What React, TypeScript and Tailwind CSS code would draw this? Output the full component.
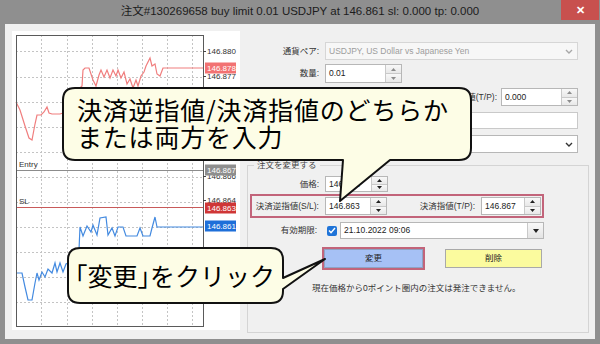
import React from 'react';

const ui = "font-['Liberation_Sans','Noto_Sans_CJK_JP',sans-serif]";

const redLine = [
  [16, 102], [20, 110], [25, 126], [29, 138], [32, 140], [35, 124], [37, 115], [41, 115], [44, 112], [47, 107],
  [49, 113], [52, 114], [60, 114], [66, 112], [70, 105], [74, 96], [78, 90], [82, 86], [83, 70], [85, 68],
  [89, 68], [93, 80], [96, 86], [99, 75], [101, 70], [104, 77], [107, 70], [110, 78], [113, 70], [116, 76],
  [118, 70], [121, 78], [124, 72], [127, 84], [130, 79], [133, 88], [136, 80], [138, 86], [141, 76], [144, 72],
  [146, 66], [150, 58], [152, 66], [155, 64], [157, 74], [160, 76], [163, 68], [203, 68],
];

const blueLeft = [
  [16, 273], [22, 273], [25, 287], [28, 300], [32, 300], [35, 283], [37, 273], [39, 280], [42, 272], [45, 277],
  [48, 269], [52, 273], [55, 263], [57, 272], [60, 263], [63, 272], [66, 264], [70, 262],
];

const blueRight = [
  [76, 258], [79, 250], [80, 227], [83, 236], [87, 226], [91, 232], [93, 225], [97, 235], [100, 218], [106, 217],
  [108, 235], [112, 228], [115, 236], [118, 227], [123, 227], [126, 236], [137, 236], [140, 228], [143, 236],
  [150, 236], [152, 228], [155, 217], [157, 227], [203, 227],
];

const pts = (a: number[][]) => a.map((p) => p.join(',')).join(' ');

function Tag({ y, bg, text }: { y: number; bg: string; text: string }) {
  return (
    <g>
      <rect x={205} y={y - 5.5} width={31} height={11} fill={bg} />
      <text x={207} y={y + 3} fontSize={8} fill="#fff">{text}</text>
    </g>
  );
}

function Axis({ y, text }: { y: number; text: string }) {
  return (
    <g>
      <line x1={203} y1={y + 0.5} x2={206} y2={y + 0.5} stroke="#444" />
      <text x={207} y={y + 3} fontSize={8} fill="#333">{text}</text>
    </g>
  );
}

function Chart() {
  const vx = [41, 67, 92, 117, 142, 167, 192];
  const hy = [51, 77, 102, 127, 152, 177, 202, 227, 252, 277, 302];
  return (
    <svg width="228" height="299" viewBox="12 31 228 299" className="block" fontFamily="Liberation Sans, sans-serif">
      {vx.map((x) => (
        <line key={x} x1={x + 0.5} y1={35} x2={x + 0.5} y2={327} stroke="#c4c4c4" strokeDasharray="2 2" />
      ))}
      {hy.map((y) => (
        <line key={y} x1={16} y1={y + 0.5} x2={203} y2={y + 0.5} stroke="#c4c4c4" strokeDasharray="2 2" />
      ))}
      <polyline points={pts(redLine)} fill="none" stroke="#f07e7e" strokeWidth={1.2} />
      <polyline points={pts(blueLeft)} fill="none" stroke="#438ae0" strokeWidth={1.2} />
      <polyline points={pts(blueRight)} fill="none" stroke="#438ae0" strokeWidth={1.2} />
      <line x1={16} y1={170.5} x2={203} y2={170.5} stroke="#8c8c8c" />
      <text x={19} y={167} fontSize={8} fill="#333">Entry</text>
      <line x1={16} y1={207.5} x2={203} y2={207.5} stroke="#c85a5a" />
      <text x={19} y={204} fontSize={8} fill="#333">SL</text>
      <rect x={16.5} y={35.5} width={187} height={291} fill="none" stroke="#5a5a5a" />
      <Axis y={51} text="146.880" />
      <Axis y={76} text="146.877" />
      <Tag y={68} bg="#f27272" text="146.878" />
      <Axis y={176} text="146.866" />
      <Tag y={170} bg="#8e8e8e" text="146.867" />
      <Axis y={200} text="146.864" />
      <Tag y={208} bg="#cf3636" text="146.863" />
      <Tag y={226} bg="#1e6fd9" text="146.861" />
    </svg>
  );
}

function Spin({ dark }: { dark?: boolean }) {
  const f = dark ? '#222' : '#8c8c8c';
  return (
    <div className="w-[16px] flex flex-col border-l border-[#c9c9c9]">
      <div className="flex-1 flex items-center justify-center bg-linear-to-b from-[#f8f8f8] to-[#e8e8e8] border-b border-[#c9c9c9]">
        <svg width="5" height="3" viewBox="0 0 5 3">
          <path d="M0 3L2.5 0L5 3Z" fill={f} />
        </svg>
      </div>
      <div className="flex-1 flex items-center justify-center bg-linear-to-b from-[#f8f8f8] to-[#e8e8e8]">
        <svg width="5" height="3" viewBox="0 0 5 3">
          <path d="M0 0L2.5 3L5 0Z" fill={f} />
        </svg>
      </div>
    </div>
  );
}

function Field({ value, className, dark }: { value?: string; className: string; dark?: boolean }) {
  return (
    <div className={`flex h-full bg-white border border-[#b7b7b7] ${className}`}>
      <div className="flex-1 pl-[3px] flex items-center text-[8.5px] text-[#222]">{value}</div>
      <Spin dark={dark} />
    </div>
  );
}

function Chevron({ color }: { color: string }) {
  return (
    <svg width="8" height="5" viewBox="0 0 8 5">
      <path d="M1 1L4 4L7 1" fill="none" stroke={color} strokeWidth={1.4} />
    </svg>
  );
}

function Label({ text, className }: { text?: string; className: string }) {
  return <div className={`shrink-0 text-right text-[8.5px] text-[#333] ${className}`}>{text}</div>;
}

export default function App() {
  return (
    <div className={`relative w-[600px] h-[344px] bg-[#8f8f8f] flex flex-col overflow-hidden ${ui}`}>
      {/* title bar */}
      <div className="h-[24px] flex items-start shrink-0">
        <div className="w-[39px]" />
        <div className="flex-1 h-[24px] flex items-center justify-center text-[11.5px] text-[#1c1c1c]">
          注文#130269658 buy limit 0.01 USDJPY at 146.861 sl: 0.000 tp: 0.000
        </div>
        <div className="w-[38px] h-[20px] mr-[1px] bg-[#c8504e] flex items-center justify-center text-white text-[11px] font-bold">
          ✕
        </div>
      </div>

      {/* dialog body */}
      <div className="flex-1 mx-[5px] mb-[5px] bg-[#f0f0f0] flex pt-[7px] pl-[7px]">
        <div className="w-[228px] h-[299px] bg-white shrink-0">
          <Chart />
        </div>

        <div className="flex-1 flex flex-col">
          <div className="flex flex-col pr-[17px]">
            <div className="flex items-center h-[18px] mt-[11px]">
              <Label text="通貨ペア:" className="w-[85px] pr-[6px]" />
              <div className="flex-1 h-full flex items-center justify-between bg-[#f7f7f7] border border-[#d6d6d6] pl-[3px] pr-[4px] text-[8.5px] text-[#9d9d9d]">
                USDJPY, US Dollar vs Japanese Yen
                <Chevron color="#a8a8a8" />
              </div>
            </div>
            <div className="flex items-center h-[19px] mt-[4px]">
              <Label text="数量:" className="w-[85px] pr-[6px]" />
              <Field value="0.01" className="w-[77px]" />
            </div>
            <div className="flex items-center h-[18px] mt-[5px]">
              <Label className="w-[85px] pr-[6px]" />
              <Field className="w-[62px]" />
              <div className="flex-1" />
              <Label text="決済指値(T/P):" className="pr-[4px]" />
              <Field value="0.000" className="w-[77px]" />
            </div>
            <div className="flex items-center h-[17px] mt-[6px]">
              <Label className="w-[85px] pr-[6px]" />
              <div className="flex-1 h-full bg-white border border-[#c9c9c9]" />
            </div>
            <div className="flex items-center h-[18px] mt-[6px]">
              <Label className="w-[85px] pr-[6px]" />
              <div className="flex-1 h-full flex items-center justify-end bg-white border border-[#b7b7b7] pr-[4px]">
                <Chevron color="#333" />
              </div>
            </div>
          </div>

          <fieldset className="mt-[6px] ml-[7px] mr-[6px] h-[174px] border border-[#d4d4d4] flex flex-col">
            <legend className="ml-[6px] px-[3px] text-[8.5px] leading-[12px] text-[#444]">注文を変更する</legend>
            <div className="flex items-center h-[16px] mt-[5px]">
              <Label text="価格:" className="w-[77px] pr-[6px]" />
              <Field value="146.861" className="w-[63px]" dark />
            </div>
            <div className="flex items-center h-[24px] w-[294px] mt-[2px] ml-[2px] border-2 border-[#c2647a]">
              <Label text="決済逆指値(S/L):" className="w-[73px] pr-[6px]" />
              <div className="h-[18px] flex">
                <Field value="146.863" className="w-[62px]" dark />
              </div>
              <Label text="決済指値(T/P):" className="w-[94px] pr-[6px]" />
              <div className="h-[18px] flex">
                <Field value="146.867" className="w-[60px]" dark />
              </div>
            </div>
            <div className="flex items-center h-[17px] mt-[4px]">
              <Label text="有効期限:" className="w-[77px] pr-[8px]" />
              <div className="ml-[2px] w-[10px] h-[10px] rounded-[2px] bg-[#1f74d8] flex items-center justify-center">
                <svg width="8" height="7" viewBox="0 0 8 7">
                  <path d="M1 3.6L3 5.6L7 1" fill="none" stroke="#fff" strokeWidth={1.4} />
                </svg>
              </div>
              <div className="ml-[3px] w-[204px] h-full flex bg-white border border-[#b7b7b7]">
                <div className="flex-1 pl-[3px] flex items-center text-[8.5px] text-[#222]">21.10.2022 09:06</div>
                <div className="w-[16px] flex items-center justify-center border-l border-[#c9c9c9] bg-linear-to-b from-[#f8f8f8] to-[#e4e4e4]">
                  <svg width="6" height="4" viewBox="0 0 6 4">
                    <path d="M0 0L3 4L6 0Z" fill="#222" />
                  </svg>
                </div>
              </div>
            </div>
            <div className="flex items-center h-[23px] mt-[8px]">
              <div className="ml-[74px] w-[103px] h-full border-2 border-[#c2647a] flex">
                <div className="flex-1 bg-[#a6c1f5] border border-[#8ea3c4] flex items-center justify-center text-[8.5px] text-[#222]">
                  変更
                </div>
              </div>
              <div className="ml-[20px] w-[97px] h-[19px] bg-[#fbfb9e] border border-[#a9a9a9] flex items-center justify-center text-[8.5px] text-[#222]">
                削除
              </div>
            </div>
            <div className="mt-[12px] ml-[64px] text-[8.5px] text-[#333]">
              現在価格から0ポイント圏内の注文は発注できません。
            </div>
          </fieldset>
        </div>
      </div>

      {/* callouts */}
      <svg className="absolute inset-0 pointer-events-none" width="600" height="344" viewBox="0 0 600 344">
        <path
          d="M75 88H459Q471 88 471 100V148Q471 160 459 160H390L340 201L343 160H75Q63 160 63 148V100Q63 88 75 88Z"
          fill="#fdfde6"
          stroke="#111"
          strokeWidth={2}
          strokeLinejoin="round"
        />
        <path
          d="M80 248H271Q283 248 283 260V278L325 259L283 289V291Q283 303 271 303H80Q68 303 68 291V260Q68 248 80 248Z"
          fill="#fdfde6"
          stroke="#111"
          strokeWidth={2}
          strokeLinejoin="round"
        />
      </svg>
      <div className="absolute left-[77px] top-[96px] text-[25px] leading-[27px] tracking-[0.8px] text-black font-['Noto_Sans_CJK_JP',sans-serif]">
        <div>決済逆指値/決済指値のどちらか</div>
        <div>または両方を入力</div>
      </div>
      <div className="absolute left-[75px] top-[262px] text-[25px] leading-[27px] text-black font-['Noto_Sans_CJK_JP',sans-serif] [font-feature-settings:'halt']">
        「変更」をクリック
      </div>
    </div>
  );
}
